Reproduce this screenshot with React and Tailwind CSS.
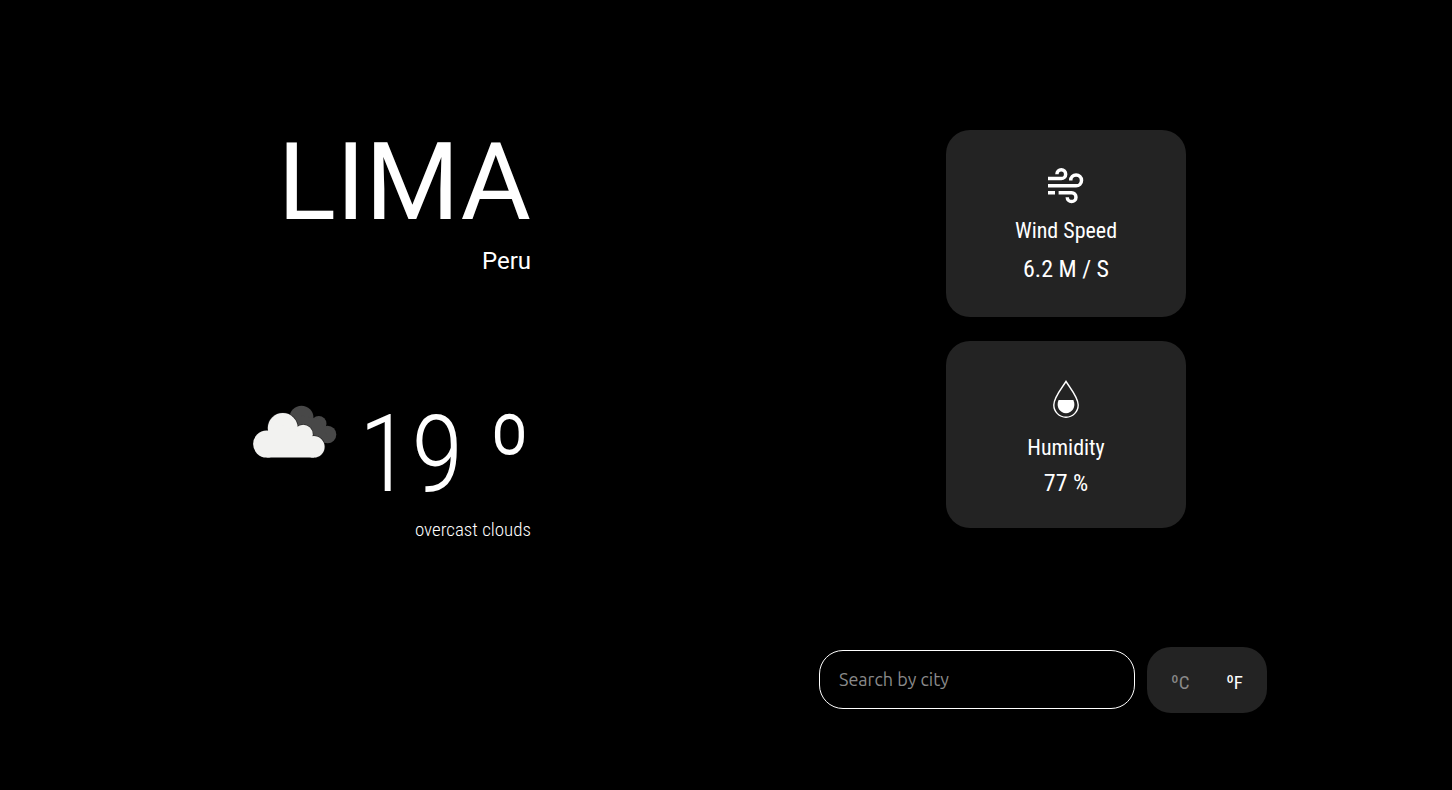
import { useState } from "react";

function CloudsIcon() {
  return (
    <svg width="84" height="53" viewBox="253 405 84 53" role="img" aria-label="overcast clouds">
      <g fill="#484848">
        <circle cx="301.5" cy="417.7" r="12" />
        <circle cx="318.8" cy="423.7" r="7.7" />
        <circle cx="327.6" cy="434.5" r="8.7" />
        <path d="M301 415L320 420L330 443H305Z" />
      </g>
      <g fill="#1c1c1c">
        <circle cx="282.8" cy="428" r="15.6" />
        <circle cx="303.2" cy="434.4" r="10.2" />
        <circle cx="313.8" cy="446.8" r="11.4" />
      </g>
      <g fill="#f2f2f0">
        <circle cx="282.8" cy="428" r="15" />
        <circle cx="266.6" cy="444.1" r="13.5" />
        <circle cx="303.2" cy="434.4" r="9.6" />
        <circle cx="313.8" cy="446.8" r="10.8" />
        <path d="M266.6 457.6V432L282 425L303 434L314 445V457.6Z" />
      </g>
    </svg>
  );
}

function WindIcon() {
  return (
    <svg width="36" height="36" viewBox="0 0 36 36" fill="none" stroke="#fff" strokeWidth="3.5" aria-hidden="true">
      <path d="M0 10.5H13.3A4.35 4.35 0 1 0 8.95 6.15" />
      <path d="M0 17.8H28.1A5.4 5.4 0 1 0 22.7 12.4" />
      <path d="M0 24.8H7M10.6 24.8H23.6A4.35 4.35 0 1 1 19.25 29.15" />
    </svg>
  );
}

function DropIcon() {
  return (
    <svg width="38" height="38" viewBox="0 0 38 38" aria-hidden="true">
      <path
        d="M19 1.4C16 6.6 6.8 17 6.8 25A12.2 12.2 0 0 0 31.2 25C31.2 17 22 6.6 19 1.4Z"
        fill="none"
        stroke="#fff"
        strokeWidth="1.4"
      />
      <path d="M11.6 20H26.4C29.4 27 25 33.2 19 33.2S8.6 27 11.6 20Z" fill="#fff" />
    </svg>
  );
}

function Card({ icon, title, value, iconSpacing, textSpacing }) {
  return (
    <article className={`flex h-[187px] w-60 flex-col items-center rounded-3xl bg-[#232323] ${iconSpacing}`}>
      {icon}
      <div className={`flex flex-col items-center ${textSpacing}`}>
        <h2 className="text-[22px] leading-7">{title}</h2>
        <p className="text-2xl leading-7">{value}</p>
      </div>
    </article>
  );
}

export default function App() {
  const [unit, setUnit] = useState("F");
  return (
    <main className="grid min-h-screen grid-cols-2 bg-black font-['Roboto_Condensed','Roboto',sans-serif] text-white">
      <section className="flex flex-col items-end pt-[118px] pr-[195px] font-['Roboto',sans-serif]">
        <h1 className="text-[108px] leading-32">LIMA</h1>
        <p className="text-2xl leading-[30px]">Peru</p>
        <div className="mt-[114px] flex items-start gap-[22px] font-['Roboto_Condensed','Roboto',sans-serif] font-light">
          <div className="pt-[15px]">
            <CloudsIcon />
          </div>
          <p className="text-[108px] leading-32 whitespace-nowrap">19 º</p>
        </div>
        <p className="font-['Roboto_Condensed','Roboto',sans-serif] text-[19px] leading-6 font-light">overcast clouds</p>
      </section>
      <section className="flex flex-col pt-[130px] pr-[139px] pl-[93px]">
        <div className="flex flex-col items-center gap-6">
          <Card
            icon={<WindIcon />}
            title="Wind Speed"
            value="6.2 M / S"
            iconSpacing="gap-[13px] pt-[38px]"
            textSpacing="gap-[10px]"
          />
          <Card
            icon={<DropIcon />}
            title="Humidity"
            value="77 %"
            iconSpacing="gap-4 pt-[39px]"
            textSpacing="gap-[7px]"
          />
        </div>
        <form className="mt-[119px] flex items-start gap-3" onSubmit={(e) => e.preventDefault()}>
          <input
            type="text"
            aria-label="Search by city"
            placeholder="Search by city"
            className="mt-[3px] h-[59px] w-[316px] rounded-3xl border border-white bg-black px-[19px] pb-[2px] font-['Ubuntu','Noto_Sans',sans-serif] text-lg text-white outline-none placeholder:text-[#8a8a8a]"
          />
          <div className="flex h-[66px] w-30 items-center justify-between rounded-3xl bg-[#232323] px-6 pt-[6px] text-[19px]">
            <button type="button" onClick={() => setUnit("C")} className={unit === "C" ? "text-white" : "text-[#8a8a8a]"}>
              ºC
            </button>
            <button type="button" onClick={() => setUnit("F")} className={unit === "F" ? "text-white" : "text-[#8a8a8a]"}>
              ºF
            </button>
          </div>
        </form>
      </section>
    </main>
  );
}
